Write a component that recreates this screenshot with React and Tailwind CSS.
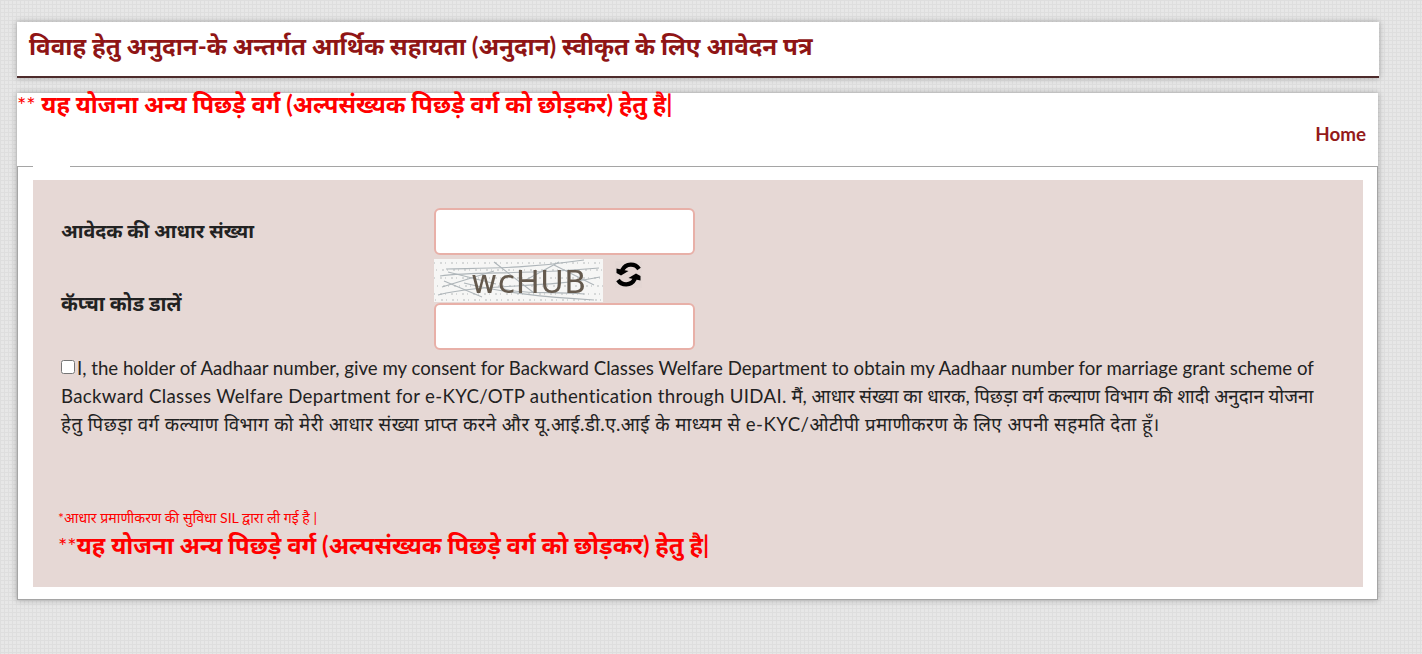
import React from "react";

const font = "font-['Lato','Noto_Sans','Noto_Sans_Devanagari','Lohit_Devanagari','FreeSans',sans-serif]";

function Captcha() {
  return (
    <div className="relative h-[43px] w-[169px] overflow-hidden bg-[#f6f6f5]">
      <svg className="absolute inset-0 blur-[0.3px]" width="169" height="43" viewBox="0 0 169 43" fill="none">
        <g stroke="#d6d8d8" strokeWidth="2" strokeDasharray="1 5 2 3">
          <path d="M0 4 H169" />
          <path d="M2 11 H169" />
          <path d="M0 19 H169" />
          <path d="M3 27 H169" />
          <path d="M0 35 H169" />
          <path d="M1 41 H169" />
        </g>
        <g stroke="#aeb5b9" strokeWidth="1.1">
          <path d="M12 10 C50 9 90 10 150 1" />
          <path d="M6 17 C40 12 90 16 165 9" />
          <path d="M8 28 L60 12" />
          <path d="M4 36 C50 24 110 30 166 18" />
          <path d="M30 24 C70 34 110 38 160 41" />
          <path d="M60 3 L100 34" />
          <path d="M120 6 L160 26" />
          <path d="M10 22 L48 38" />
          <path d="M14 13 L62 25" />
          <path d="M70 30 C90 36 120 32 150 35" />
          <path d="M125 3 L90 22" />
        </g>
      </svg>
      <span className="absolute left-[37px] top-[3px] font-['DejaVu_Sans',sans-serif] text-[32px] leading-[40px] tracking-[0.5px] text-[#64594d] blur-[0.4px]">wcHUB</span>
    </div>
  );
}

function RefreshIcon() {
  return (
    <svg className="ml-[12px] mt-[2px] bg-[#e3d6d3]" width="27" height="27" viewBox="0 0 27 27" fill="none">
      <g>
        <path d="M24 8 C20.5 2.5 11 1.5 7 9.5" stroke="#000" strokeWidth="4.2" />
        <path d="M1.5 7.5 L13.5 10 L6 14.5 L1.5 12 Z" fill="#000" />
      </g>
      <g transform="rotate(180 13.5 13.5)">
        <path d="M24 8 C20.5 2.5 11 1.5 7 9.5" stroke="#000" strokeWidth="4.2" />
        <path d="M1.5 7.5 L13.5 10 L6 14.5 L1.5 12 Z" fill="#000" />
      </g>
    </svg>
  );
}

export default function App() {
  return (
    <div className={`${font} min-h-[654px] bg-[#e7e7e7] bg-[linear-gradient(#dedede_1px,transparent_1px),linear-gradient(90deg,#dedede_1px,transparent_1px)] bg-[length:4px_4px] pl-[17px] pr-[43px] pt-[22px] text-[#222]`}>
      <div className="flex h-[56px] w-[1362px] items-start border-b-2 border-[#4e2c2c] bg-white pl-3 pt-[8px] shadow-[0_0_6px_rgba(0,0,0,0.3)]">
        <h1 className="text-[24.2px] font-bold leading-[32px] text-[#8f1515]">विवाह हेतु अनुदान-के अन्तर्गत आर्थिक सहायता (अनुदान) स्वीकृत के लिए आवेदन पत्र</h1>
      </div>

      <div className="mt-[15px] w-[1361px] bg-white shadow-[0_0_6px_rgba(0,0,0,0.3)]">
        <div className="h-[25px] text-[23.8px] font-bold leading-[22px] text-[#ff0000]">
          <span className="text-[22px] font-normal">** </span>यह योजना अन्य पिछड़े वर्ग (अल्पसंख्यक पिछड़े वर्ग को छोड़कर) हेतु है|
        </div>
        <div className="flex h-[48px] items-start justify-end pr-[12px] pt-[3px]">
          <a className="text-[18.8px] font-bold leading-[26px] text-[#941a1a]">Home</a>
        </div>
        <div className="relative border border-[#a5a5a5] pb-[12px] pl-[15px] pr-[14px] pt-[13px]">
          <div className="absolute left-[15px] top-[-1px] h-px w-[37px] bg-white" />
          <div className="h-[407px] bg-[#e6d8d5] pl-[28px] pr-[24px] pt-[28px]">
            <div className="grid grid-cols-[373px_261px] gap-y-[4px]">
              <label className="pt-[8px] text-[19.6px] font-bold leading-[30px]">आवेदक की आधार संख्या</label>
              <input className="h-[47px] rounded-[6px] border-2 border-[#e8b0a8] bg-white" />
              <label className="pt-[29px] text-[20.3px] font-bold leading-[30px]">कॅप्चा कोड डालें</label>
              <div className="flex flex-col">
                <div className="flex items-start">
                  <Captcha />
                  <RefreshIcon />
                </div>
                <input className="mt-px h-[47px] rounded-[6px] border-2 border-[#e8b0a8] bg-white" />
              </div>
            </div>
            <p className="mt-[4px] text-[18.65px] leading-[28px] text-[#222]">
              <input type="checkbox" className="mr-[2px] h-[14px] w-[14px] align-[1px]" />I, the holder of Aadhaar number, give my consent for Backward Classes Welfare Department to obtain my Aadhaar number for marriage grant scheme of <span className="tracking-[0.33px]">Backward Classes Welfare Department for e-KYC/OTP authentication through UIDAI.</span> मैं, आधार संख्या का धारक, पिछड़ा वर्ग कल्याण विभाग की शादी अनुदान योजना <span className="tracking-[0.48px]">हेतु पिछड़ा वर्ग कल्याण विभाग को मेरी आधार संख्या प्राप्त करने और यू.आई.डी.ए.आई के माध्यम से e-KYC/ओटीपी प्रमाणीकरण के लिए अपनी सहमति देता हूँ।</span>
            </p>
            <p className="-ml-[3px] mt-[70px] text-[14.15px] leading-[20px] text-[#ff0000]">*आधार प्रमाणीकरण की सुविधा SIL द्वारा ली गई है |</p>
            <p className="-ml-[3px] mt-[1px] text-[23.85px] font-bold leading-[32px] text-[#ff0000]">
              <span className="text-[22px] font-normal">**</span>यह योजना अन्य पिछड़े वर्ग (अल्पसंख्यक पिछड़े वर्ग को छोड़कर) हेतु है|
            </p>
          </div>
        </div>
      </div>
    </div>
  );
}
